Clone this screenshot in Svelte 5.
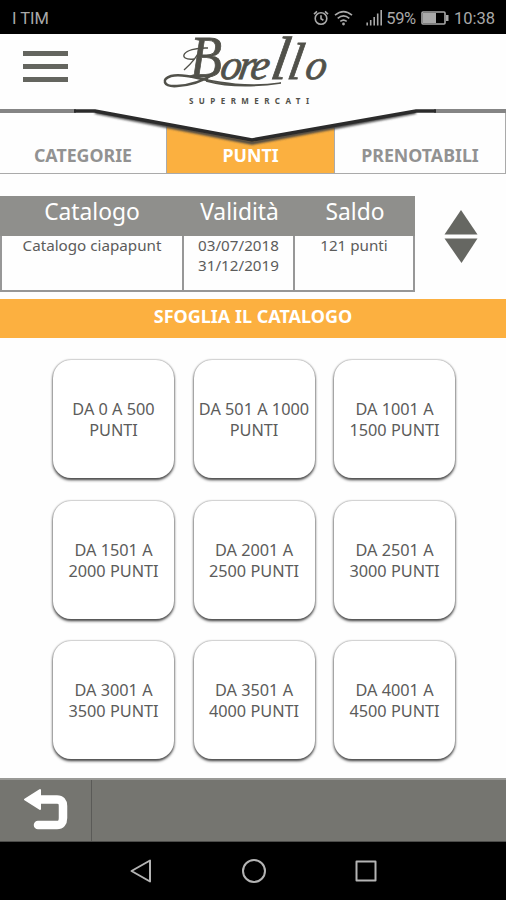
<script>
  const tabs = [
    { label: 'CATEGORIE', active: false },
    { label: 'PUNTI', active: true },
    { label: 'PRENOTABILI', active: false },
  ];

  const ranges = [
    'DA 0 A 500',
    'DA 501 A 1000',
    'DA 1001 A 1500',
    'DA 1501 A 2000',
    'DA 2001 A 2500',
    'DA 2501 A 3000',
    'DA 3001 A 3500',
    'DA 3501 A 4000',
    'DA 4001 A 4500',
  ];
</script>

<div class="screen">
  <div class="status">
    <span class="carrier">I TIM</span>
    <svg class="alarm" width="16" height="16" viewBox="0 0 16 16">
      <circle cx="8" cy="8.5" r="5.8" />
      <path d="M8 5.2v3.6l2.4 1.5M1 4.2L4 1.4M15 4.2L12 1.4" />
    </svg>
    <svg class="wifi" width="19" height="16" viewBox="0 0 19 16">
      <path d="M1 5.2Q9.5 -2 18 5.2M3.7 8.4Q9.5 3.5 15.3 8.4M6.3 11.4Q9.5 8.8 12.7 11.4" />
      <circle cx="9.5" cy="14" r="1.4" />
    </svg>
    <svg class="signal" width="17" height="16" viewBox="0 0 17 16">
      <path d="M1.2 15.5v-3M4.7 15.5V10M8.2 15.5V7M11.7 15.5V3.5M15.2 15.5V0" />
    </svg>
    <span class="percent">59%</span>
    <svg class="battery" width="28" height="14" viewBox="0 0 28 14">
      <rect class="shell" x="1" y="1" width="23" height="12" rx="1" />
      <rect class="level" x="2" y="2" width="13" height="10" />
      <rect class="level" x="25" y="4" width="2.5" height="6" />
    </svg>
    <span class="time">10:38</span>
  </div>

  <header>
    <svg class="edge" width="506" height="115" viewBox="0 0 506 115">
      <defs>
        <filter id="soft" x="-5%" y="-20%" width="110%" height="150%">
          <feGaussianBlur stdDeviation="1.2" />
        </filter>
      </defs>
      <path class="shade" d="M95 78L252 109L416 78" filter="url(#soft)" />
      <path class="fill" d="M0 0H506V76H416L252 105L95 76H0Z" />
      <path class="side" d="M0 77H76M434 77H506" />
      <path class="line" d="M74 77H95L252 106L416 77H436" />
    </svg>
    <button class="menu" aria-label="Menu">
      <span></span>
      <span></span>
      <span></span>
    </button>
    <div class="logo">
      <svg width="170" height="74" viewBox="0 0 170 74">
        <path class="swash" d="M46 46C36 45 22 39 9 42C-1 45 1 53 15 52C31 51 41 47 50 41" />
        <path class="swash thin" d="M36 44C56 48 82 54 119 49C92 53 66 53 44 47" />
        <path class="swash thin" d="M22 36C29 30 36 21 40 13M32 25C15 27 19 13 46 14" />
        <text class="initial" x="28" y="43" textLength="32" lengthAdjust="spacingAndGlyphs">B</text>
        <g transform="translate(0 45) skewX(-10)">
          <text class="brand" x="57 75 87 107 124 142" y="0">ore<tspan class="tall">l</tspan><tspan class="mid">l</tspan>o</text>
        </g>
        <text class="sub" x="27" y="70" textLength="120">SUPERMERCATI</text>
      </svg>
    </div>
  </header>

  <nav class="tabs">
    {#each tabs as tab}
      <div class="tab" class:active={tab.active}><span>{tab.label}</span></div>
    {/each}
  </nav>

  <div class="summary">
    <table>
      <thead>
        <tr><th class="c1">Catalogo</th><th class="c2">Validità</th><th class="c3">Saldo</th></tr>
      </thead>
      <tbody>
        <tr>
          <td>Catalogo ciapapunt</td>
          <td class="dates">03/07/2018<br />31/12/2019</td>
          <td>121 punti</td>
        </tr>
      </tbody>
    </table>
    <svg class="sorter" width="34" height="54" viewBox="0 0 34 54">
      <path d="M17 0L33.5 24.5H0.5Z" />
      <path d="M0.5 28.5H33.5L17.5 53Z" />
    </svg>
  </div>

  <h2>SFOGLIA IL CATALOGO</h2>

  <main>
    {#each ranges as range}
      <button class="card"><span>{range} PUNTI</span></button>
    {/each}
  </main>

  <footer>
    <button class="back" aria-label="Indietro">
      <svg width="46" height="44" viewBox="0 0 46 44">
        <path class="bend" d="M16 11.5H34Q40 11.5 40 18V30Q40 37 34 37H15" />
        <path class="head" d="M2 11.5L17 2V21Z" />
      </svg>
    </button>
  </footer>

  <div class="system">
    <svg width="24" height="26" viewBox="0 0 24 26"><path d="M21 2.5V23.5L2.5 13Z" /></svg>
    <svg width="26" height="26" viewBox="0 0 26 26"><circle cx="13" cy="13" r="11" /></svg>
    <svg width="24" height="26" viewBox="0 0 24 26"><rect x="1.5" y="3.5" width="19" height="19" /></svg>
  </div>
</div>

<style>
  :global(body) {
    margin: 0;
    background: #fff;
  }

  .screen {
    width: 506px;
    height: 900px;
    display: flex;
    flex-direction: column;
    overflow: hidden;
    background: #fefefe;
    font-family: "Noto Sans", sans-serif;
    color: #5c5c5b;
  }

  button {
    padding: 0;
    border: 0;
    background: none;
    font: inherit;
    color: inherit;
  }

  .status {
    height: 34px;
    flex: none;
    box-sizing: border-box;
    display: flex;
    align-items: center;
    padding: 2px 11px 0 12px;
    background: #000;
    color: #a9a9a9;
    font: 16.5px Roboto, sans-serif;
  }

  .status svg {
    flex: none;
    fill: none;
    stroke: #a9a9a9;
    stroke-width: 1.6;
  }

  .carrier {
    flex: 1;
  }

  .wifi {
    margin-left: 5px;
  }

  .wifi circle,
  .battery .level {
    fill: #a9a9a9;
    stroke: none;
  }

  .signal {
    margin-left: 13px;
  }

  .percent {
    margin-left: 3px;
    letter-spacing: -0.3px;
  }

  .battery {
    margin: 0 5px 0 5px;
  }

  header {
    position: relative;
    z-index: 1;
    height: 77px;
    flex: none;
    display: flex;
  }

  .edge {
    position: absolute;
    top: 0;
    left: 0;
  }

  .edge path {
    fill: none;
  }

  .edge .shade {
    stroke: #444;
    stroke-width: 3.5;
  }

  .edge .fill {
    fill: #fefefe;
  }

  .edge .side {
    stroke: #858585;
    stroke-width: 4;
  }

  .edge .line {
    stroke: #2b2b2b;
    stroke-width: 3.5;
  }

  .menu {
    position: relative;
    width: 45px;
    height: 31px;
    margin: 17px 0 0 23px;
    display: flex;
    flex-direction: column;
    justify-content: space-between;
  }

  .menu span {
    width: 45px;
    height: 5px;
    background: #64655f;
  }

  .logo {
    position: relative;
    margin-left: 94px;
  }

  .logo svg {
    display: block;
    overflow: visible;
  }

  .logo text {
    fill: #51514a;
    font-family: "Liberation Serif", serif;
    font-style: italic;
  }

  .logo .initial {
    font-size: 60px;
    stroke: #51514a;
    stroke-width: 0.8;
  }

  .logo .brand {
    font-size: 42px;
    stroke: #51514a;
    stroke-width: 0.8;
  }

  .logo .tall {
    font-size: 61px;
  }

  .logo .mid {
    font-size: 52px;
  }

  .logo .sub {
    font: bold 8px "Noto Sans", sans-serif;
  }

  .swash {
    fill: none;
    stroke: #51514a;
    stroke-width: 2.6;
  }

  .swash.thin {
    stroke-width: 1.4;
  }

  .tabs {
    height: 63px;
    flex: none;
    display: grid;
    grid-template-columns: 167px 168px 171px;
  }

  .tab {
    box-sizing: border-box;
    display: flex;
    align-items: flex-end;
    justify-content: center;
    padding-bottom: 6px;
    border-right: 1px solid #aaa;
    border-bottom: 1px solid #aaa;
    color: #929292;
    font-size: 17.8px;
    font-weight: 700;
  }

  .tab.active {
    background: #fbb040;
    color: #fff;
  }

  .summary {
    display: flex;
    height: 96px;
    flex: none;
    margin-top: 22px;
  }

  table {
    width: 415px;
    height: 96px;
    table-layout: fixed;
    border-collapse: separate;
    border-spacing: 0;
    text-align: center;
  }

  .c1 {
    width: 184px;
  }

  .c2 {
    width: 111px;
  }

  th {
    height: 40px;
    box-sizing: border-box;
    padding: 0 0 8px;
    background: #8f8f8c;
    color: #fff;
    font-size: 22.8px;
    font-weight: 400;
    line-height: 30px;
  }

  td {
    padding: 0;
    vertical-align: top;
    border-right: 2px solid #979797;
    border-bottom: 2px solid #979797;
    font-size: 15.2px;
    line-height: 19.5px;
  }

  td:first-child {
    border-left: 2px solid #979797;
  }

  .sorter {
    margin: 14px 0 0 29px;
    fill: #666762;
  }

  h2 {
    height: 39px;
    flex: none;
    margin: 7px 0 0;
    background: #fcb040;
    color: #fff;
    font-size: 18px;
    font-weight: 700;
    line-height: 34px;
    text-align: center;
  }

  main {
    flex: 1;
    display: grid;
    grid-template-columns: repeat(3, 121px);
    grid-auto-rows: 118px;
    gap: 22.5px 19.5px;
    padding: 22.4px 0 0 53px;
  }

  .card {
    display: flex;
    align-items: center;
    justify-content: center;
    padding-top: 2px;
    border-radius: 18px;
    background: #fff;
    box-shadow: 0 0 2px #777, 0 2px 3px #333;
    font-size: 16.3px;
    line-height: 21px;
  }

  .card span {
    width: 116px;
  }

  footer {
    height: 64px;
    flex: none;
    box-sizing: border-box;
    display: flex;
    border-top: 2px solid #999996;
    border-bottom: 1px solid #4c4c4a;
    background: #757570;
  }

  .back {
    width: 92px;
    box-sizing: border-box;
    display: flex;
    padding: 8px 0 0 23px;
    border-right: 1px solid #5a5a57;
  }

  .back .bend {
    fill: none;
    stroke: #fff;
    stroke-width: 8.5;
    stroke-linecap: round;
  }

  .back .head {
    fill: #fff;
    stroke: #fff;
    stroke-width: 2;
    stroke-linejoin: round;
  }

  .system {
    height: 58px;
    flex: none;
    display: flex;
    align-items: center;
    gap: 88px;
    padding-left: 129px;
    background: #000;
  }

  .system svg {
    fill: none;
    stroke: #b4b4b4;
    stroke-width: 2;
    stroke-linejoin: round;
  }
</style>
